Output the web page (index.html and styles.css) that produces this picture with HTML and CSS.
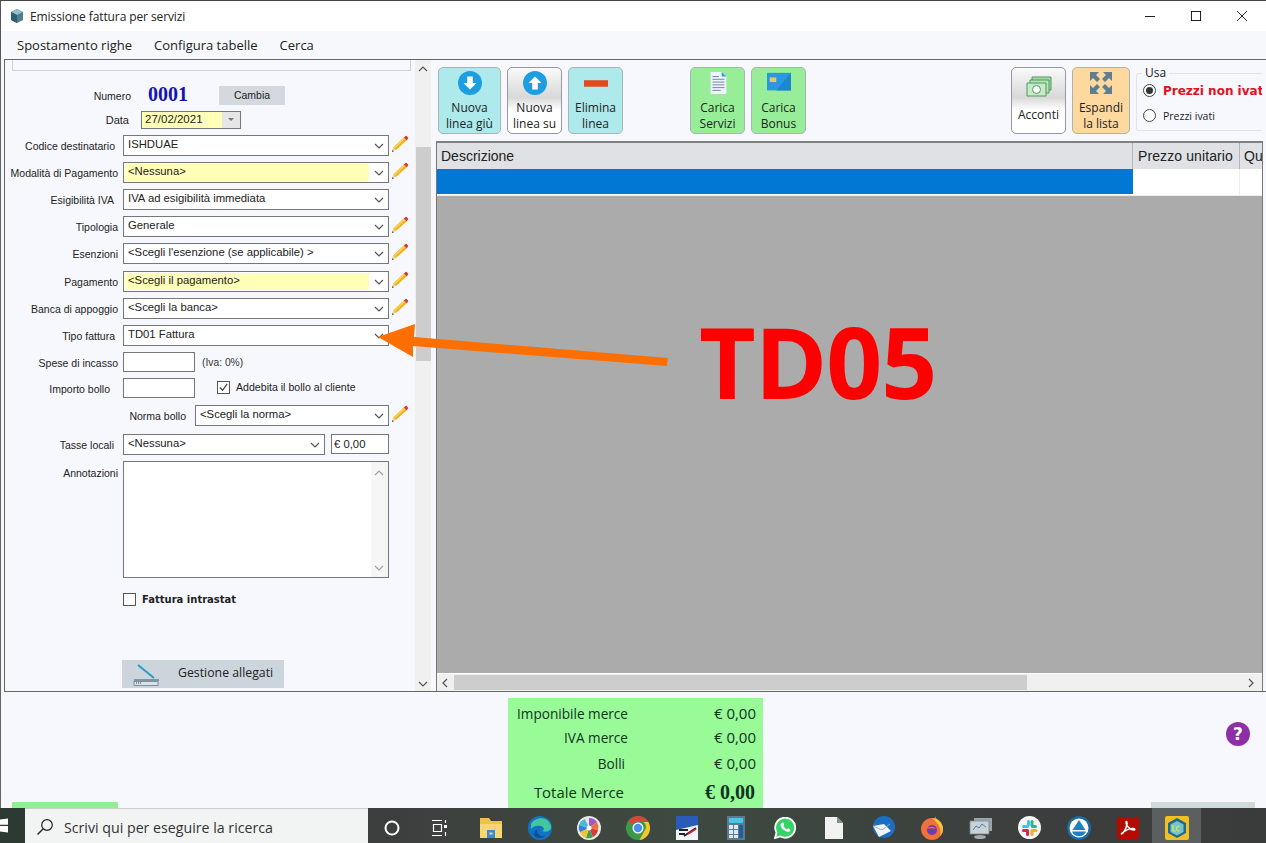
FILE: index.html
```html
<!DOCTYPE html>
<html lang="it">
<head>
<meta charset="utf-8">
<title>Emissione fattura per servizi</title>
<link rel="stylesheet" href="styles.css">
</head>
<body>
<svg class="defs" width="0" height="0">
  <defs>
    <symbol id="chev" viewBox="0 0 10 6"><path d="M1 1l4 4 4-4" fill="none" stroke="#555" stroke-width="1.2"/></symbol>
    <symbol id="pencil" viewBox="0 0 18 18">
      <path d="M1 17l1.2-4.6L4.900 15z" fill="#e9d3a0"/>
      <path d="M1 17l.5-1.900 1.400 1.400z" fill="#444"/>
      <path d="M2.200 12.400L12.800 2.600l2.800 2.900L4.900 15z" fill="#f2b01e"/>
      <path d="M2.200 12.400L12.800 2.600l1.300 1.400L3.500 13.800z" fill="#f9cf55"/>
      <path d="M12.800 2.600l1.700-1.500a1 1 0 0 1 1.300 0l1.200 1.300a1 1 0 0 1 0 1.300l-1.400 1.800z" fill="#c9453b"/>
    </symbol>
  </defs>
</svg>
<div class="window">
  <header class="titlebar">
    <svg class="app-icon" viewBox="0 0 14 16" width="14" height="16"><path d="M7 1l6 3v8l-6 3-6-3V4z" fill="#4f7f8c"/><path d="M7 1l6 3-6 3-6-3z" fill="#8cc0cc"/><path d="M7 7v8l-6-3V4z" fill="#2f5f70"/></svg>
    <span class="title-text">Emissione fattura per servizi</span>
    <div class="win-controls">
      <svg width="12" height="12" viewBox="0 0 12 12"><path d="M1 6.500h10" stroke="#222" stroke-width="1"/></svg>
      <svg width="12" height="12" viewBox="0 0 12 12"><rect x="1.500" y="1.500" width="9" height="9" fill="none" stroke="#222"/></svg>
      <svg width="12" height="12" viewBox="0 0 12 12"><path d="M1 1l10 10M11 1L1 11" stroke="#222" stroke-width="1"/></svg>
    </div>
  </header>
  <nav class="menubar">
    <span>Spostamento righe</span><span>Configura tabelle</span><span>Cerca</span>
  </nav>
  <main class="main">
    <section class="form-pane">
      <div class="form">
        <div class="top-stub"></div>
        <div class="numero-row">
          <span class="numero-label">Numero</span>
          <span class="numero-value">0001</span>
          <span class="cambia">Cambia</span>
        </div>
        <div class="data-row">
          <span class="data-label">Data</span>
          <div class="datebox"><span class="date-text">27/02/2021</span><span class="date-btn"></span></div>
        </div>
        <div class="row"><label class="lbl in3">Codice destinatario</label><div class="combo"><span class="val">ISHDUAE</span><svg class="chev"><use href="#chev"/></svg></div><svg class="pencil"><use href="#pencil"/></svg></div>
        <div class="row"><label class="lbl">Modalità di Pagamento</label><div class="combo"><span class="val yellow">&lt;Nessuna&gt;</span><svg class="chev"><use href="#chev"/></svg></div><svg class="pencil"><use href="#pencil"/></svg></div>
        <div class="row"><label class="lbl in4">Esigibilità IVA</label><div class="combo"><span class="val">IVA ad esigibilità immediata</span><svg class="chev"><use href="#chev"/></svg></div></div>
        <div class="row"><label class="lbl">Tipologia</label><div class="combo"><span class="val">Generale</span><svg class="chev"><use href="#chev"/></svg></div><svg class="pencil"><use href="#pencil"/></svg></div>
        <div class="row wide"><label class="lbl">Esenzioni</label><div class="combo"><span class="val">&lt;Scegli l'esenzione (se applicabile) &gt;</span><svg class="chev"><use href="#chev"/></svg></div><svg class="pencil"><use href="#pencil"/></svg></div>
        <div class="row"><label class="lbl">Pagamento</label><div class="combo"><span class="val yellow">&lt;Scegli il pagamento&gt;</span><svg class="chev"><use href="#chev"/></svg></div><svg class="pencil"><use href="#pencil"/></svg></div>
        <div class="row"><label class="lbl">Banca di appoggio</label><div class="combo"><span class="val">&lt;Scegli la banca&gt;</span><svg class="chev"><use href="#chev"/></svg></div><svg class="pencil"><use href="#pencil"/></svg></div>
        <div class="row"><label class="lbl in3">Tipo fattura</label><div class="combo"><span class="val">TD01 Fattura</span><svg class="chev"><use href="#chev"/></svg></div></div>
        <div class="row tight"><label class="lbl">Spese di incasso</label><div class="field"></div><span class="note">(Iva: 0%)</span></div>
        <div class="row"><label class="lbl in8">Importo bollo</label><div class="field"></div><span class="checkbox checked"><svg viewBox="0 0 12 12" width="11" height="11"><path d="M2 6l3 3 5-7" fill="none" stroke="#444" stroke-width="1.300"/></svg></span><span class="check-text">Addebita il bollo al cliente</span></div>
        <div class="row wide2"><label class="lbl norma">Norma bollo</label><div class="combo short"><span class="val">&lt;Scegli la norma&gt;</span><svg class="chev"><use href="#chev"/></svg></div><svg class="pencil"><use href="#pencil"/></svg></div>
        <div class="row"><label class="lbl in4">Tasse locali</label><div class="combo tasse"><span class="val">&lt;Nessuna&gt;</span><svg class="chev"><use href="#chev"/></svg></div><div class="field euro">€ 0,00</div></div>
        <div class="row notes-row"><label class="lbl notes-lbl">Annotazioni</label>
          <div class="textarea"><div class="ta-scroll"><svg class="ta-chev up"><use href="#chev"/></svg><svg class="ta-chev"><use href="#chev"/></svg></div></div>
        </div>
        <div class="intrastat"><span class="checkbox"></span><span class="intrastat-text">Fattura intrastat</span></div>
        <div class="allegati">
          <svg width="30" height="26" viewBox="0 0 30 26"><path d="M7 4l16 13" stroke="#2b9ac9" stroke-width="2"/><path d="M3 19h25" stroke="#3a5566" stroke-width="1"/><rect x="3" y="20.500" width="24" height="4" fill="#d9e2e8" stroke="#6c8090" stroke-width=".8"/><path d="M5 22h6" stroke="#335" stroke-width="1" stroke-dasharray="1 1"/></svg>
          <span>Gestione allegati</span>
        </div>
      </div>
      <div class="vscroll">
        <svg class="sb-arrow flip"><use href="#chev"/></svg>
        <div class="vthumb"></div>
        <svg class="sb-arrow bottom-arrow"><use href="#chev"/></svg>
      </div>
    </section>
    <section class="right-pane">
      <div class="toolbar">
        <div class="tbtn cyan w63">
          <svg class="ic" width="24" height="24" viewBox="0 0 26 26"><circle cx="13" cy="13" r="13" fill="#1e9ee0"/><path d="M10 6h6v7h4l-7 7-7-7h4z" fill="#fff"/></svg>
          <span>Nuova<br>linea giù</span>
        </div>
        <div class="tbtn white">
          <svg class="ic" width="24" height="24" viewBox="0 0 26 26"><circle cx="13" cy="13" r="13" fill="#1e9ee0"/><path d="M10 20h6v-7h4l-7-7-7 7h4z" fill="#fff"/></svg>
          <span>Nuova<br>linea su</span>
        </div>
        <div class="tbtn cyan">
          <svg class="ic" width="24" height="24" viewBox="0 0 26 26"><rect x="0" y="10" width="26" height="7" fill="#e2491c"/></svg>
          <span>Elimina<br>linea</span>
        </div>
        <div class="tbtn green gap-a">
          <svg class="ic" width="24" height="24" viewBox="0 0 26 26"><path d="M5 1h12l5 5v19H5z" fill="#eef4fb"/><path d="M17 1l5 5h-5z" fill="#2aa0e0"/><path d="M7 6h7M7 9h13M7 12h13M7 15h13M7 18h13M7 21h9" stroke="#6b7f9a" stroke-width="1"/></svg>
          <span>Carica<br>Servizi</span>
        </div>
        <div class="tbtn green">
          <svg class="ic" width="24" height="24" viewBox="0 0 26 26"><rect y="2" width="26" height="19" fill="#2a98dc"/><path d="M26 2v19H10z" fill="#1e86cc"/><rect x="3" y="7" width="7" height="5" fill="#e8c95a"/></svg>
          <span>Carica<br>Bonus</span>
        </div>
        <div class="tbtn white gap-b acconti">
          <svg class="ic" width="26" height="24" viewBox="0 0 26 24"><path d="M6 2h19v13H6z" fill="#a8d8a8" stroke="#4b9a5d"/><path d="M4 5h19v13H4z" fill="#b9e2b9" stroke="#4b9a5d"/><path d="M1 8h19v13H1z" fill="#c9eac9" stroke="#4b9a5d"/><circle cx="10.500" cy="14.500" r="4" fill="#fff" stroke="#4b9a5d"/></svg>
          <span>Acconti</span>
        </div>
        <div class="tbtn orange w58">
          <svg class="ic" width="24" height="24" viewBox="0 0 24 24"><g fill="#5f7d8c"><path d="M1 1h9L7 4l4 4-3 3-4-4-3 3z"/><path d="M23 1v9l-3-3-4 4-3-3 4-4-3-3z"/><path d="M1 23v-9l3 3 4-4 3 3-4 4 3 3z"/><path d="M23 23h-9l3-3-4-4 3-3 4 4 3-3z"/></g></svg>
          <span>Espandi<br>la lista</span>
        </div>
        <fieldset class="usa">
          <legend>Usa</legend>
          <div class="radio-row first"><span class="radio on"></span><span class="radio-strong">Prezzi non ivati</span></div>
          <div class="radio-row"><span class="radio"></span><span class="radio-text">Prezzi ivati</span></div>
        </fieldset>
      </div>
      <div class="grid">
        <div class="grid-head">
          <div class="col-desc">Descrizione</div><div class="col-price">Prezzo unitario</div><div class="col-q">Qu</div>
        </div>
        <div class="grid-row">
          <div class="cell-sel"></div><div class="cell-price"></div><div class="cell-q"></div>
        </div>
        <div class="grid-empty"></div>
        <div class="hscroll">
          <svg class="h-arrow left"><use href="#chev"/></svg>
          <div class="hthumb"></div>
          <svg class="h-arrow right"><use href="#chev"/></svg>
        </div>
      </div>
    </section>
  </main>
  <section class="bottom">
    <div class="stub-green"></div>
    <div class="totals">
      <div class="t-row r1"><span class="t-name">Imponibile merce</span><span class="t-val">€ 0,00</span></div>
      <div class="t-row r2"><span class="t-name">IVA merce</span><span class="t-val">€ 0,00</span></div>
      <div class="t-row r3"><span class="t-name n3">Bolli</span><span class="t-val">€ 0,00</span></div>
      <div class="t-row r4"><span class="t-name n4">Totale Merce</span><span class="t-total">€ 0,00</span></div>
    </div>
    <div class="side">
      <div class="help">?</div>
      <div class="stub-gray"></div>
    </div>
  </section>
  <footer class="taskbar">
    <div class="start"><svg width="8" height="15" viewBox="0 0 8 15"><path d="M0 1.500l8-1.100v6.300H0zM0 8h8v6.600l-8-1.100z" fill="#fff"/></svg></div>
    <div class="search">
      <svg width="18" height="18" viewBox="0 0 18 18"><circle cx="11" cy="7" r="5.300" fill="none" stroke="#222" stroke-width="1.200"/><path d="M7 11l-5.500 5.500" stroke="#222" stroke-width="1.400"/></svg>
      <span>Scrivi qui per eseguire la ricerca</span>
    </div>
    <div class="tray">
      <div class="cell cortana"><svg width="18" height="18" viewBox="0 0 18 18"><circle cx="9" cy="9" r="6.500" fill="none" stroke="#fff" stroke-width="2"/></svg></div>
      <div class="cell taskview"><svg width="18" height="18" viewBox="0 0 18 18"><path d="M1 1.500h10M1 16.500h10M2.500 5.500h8v7h-8z M14.500 1v3M14.500 13v4" fill="none" stroke="#fff" stroke-width="1.200"/><rect x="13" y="6" width="3" height="3" fill="#fff"/></svg></div>
      <div class="cell"><svg width="24" height="22" viewBox="0 0 24 22"><path d="M1 1h9l2 3h11v16H1z" fill="#f3c14a"/><path d="M1 7h22v14H1z" fill="#f7d774"/><path d="M8 13h8v8H8z" fill="#3a8ad6"/><path d="M10.500 15.500h3v2h-3z" fill="#f7d774"/></svg></div>
      <div class="cell"><svg width="24" height="24" viewBox="0 0 24 24"><circle cx="12" cy="12" r="12" fill="#1273c4"/><path d="M3 8C6 1 20-1 23 10c1 5-5 7-9 5 3-1 2-4-1-5-4-1-8 0-10 3z" fill="#42c6a0"/><path d="M9 14c0 4 4 7 8 6-3 3-9 3-11-1-1-2 1-5 3-5z" fill="#0b4f96"/></svg></div>
      <div class="cell"><svg width="24" height="24" viewBox="0 0 24 24"><circle cx="12" cy="12" r="12" fill="#e8e8e8"/><path d="M12 12L12 2a10 10 0 0 1 8 4z" fill="#a257c8"/><path d="M12 12l8-6a10 10 0 0 1 1 8z" fill="#e8743b"/><path d="M12 12l9 2a10 10 0 0 1-5 7z" fill="#d93838"/><path d="M12 12l4 9a10 10 0 0 1-7 1z" fill="#3da04a"/><path d="M12 12l-3 10a10 10 0 0 1-6-6z" fill="#f0c43a"/><path d="M12 12L3 16a10 10 0 0 1-1-7z" fill="#3a7dd8"/><path d="M12 12L2 9a10 10 0 0 1 6-6z" fill="#4cb8d8"/><circle cx="12" cy="12" r="2.500" fill="#fff"/></svg></div>
      <div class="cell"><svg width="24" height="24" viewBox="0 0 24 24"><circle cx="12" cy="12" r="12" fill="#3a9a4a"/><path d="M12 0a12 12 0 0 1 10.400 6H12a6 6 0 0 0-5.200 3L2.700 4.500A12 12 0 0 1 12 0z" fill="#d9453a"/><path d="M22.400 6a12 12 0 0 1-9 18l5-9a6 6 0 0 0-1-9z" fill="#f6c530"/><circle cx="12" cy="12" r="5.500" fill="#fff"/><circle cx="12" cy="12" r="4.200" fill="#4a8cf0"/></svg></div>
      <div class="cell"><svg width="22" height="24" viewBox="0 0 22 24"><rect width="22" height="24" fill="#f2f4fa"/><path d="M0 0h22v9L0 14z" fill="#2a5bb8"/><path d="M3 14h9M3 18h6M8 20l12-8" stroke="#222" stroke-width="1.800"/><path d="M12 18l8-5" stroke="#c8283c" stroke-width="1.600"/></svg></div>
      <div class="cell"><svg width="18" height="24" viewBox="0 0 18 24"><rect width="18" height="24" fill="#5e7a92"/><rect x="2" y="2" width="14" height="5" fill="#47c6ea"/><path d="M2 9h4v4H2zM7 9h4v4H7zM2 14h4v4H2zM7 14h4v4H7zM2 19h4v3H2zM7 19h4v3H7z" fill="#dfe8ee"/><rect x="12" y="9" width="4" height="13" fill="#1f5f99"/></svg></div>
      <div class="cell"><svg width="22" height="22" viewBox="0 0 22 22"><path d="M1 21l1.500-5.400A10 10 0 1 1 6.500 19.500z" fill="#35d366" stroke="#fff" stroke-width="1.800"/><path d="M7.500 6.500c1-1.500 2-1 2.500.5.300 1 0 1.300-.6 2 .8 1.500 2 2.700 3.500 3.500.8-.9 1.200-1.200 2-.7 1.700.8 2 1.500.6 2.700-2 1.500-8-2-9-6-.2-1 .4-1.700 1-2.500z" fill="#fff"/></svg></div>
      <div class="cell"><svg width="18" height="22" viewBox="0 0 18 22"><path d="M0 0h12l6 6v16H0z" fill="#f2f2f2"/><path d="M12 0l6 6h-6z" fill="#8a8a8a"/></svg></div>
      <div class="cell"><svg width="24" height="24" viewBox="0 0 24 24"><circle cx="13" cy="11" r="11" fill="#1b6fc2"/><path d="M2 10l11-2 7 7-12 6z" fill="#f2f4f8"/><path d="M2 10l9 4 8-6" fill="none" stroke="#9cb4cc" stroke-width="1"/></svg></div>
      <div class="cell"><svg width="24" height="24" viewBox="0 0 24 24"><circle cx="12" cy="13" r="11" fill="#f0703a"/><path d="M12 2c6 0 11 5 11 11 0 3-1 5-3 7 2-7-2-13-8-18z" fill="#fbb93c"/><path d="M15 0c1 4 6 6 7 12-3-4-7-7-7-12z" fill="#fdd13f"/><circle cx="12" cy="14" r="5" fill="#6a3ab8"/><path d="M7 13c2-3 7-3 9 0-3-1-6-1-9 0z" fill="#f0703a"/></svg></div>
      <div class="cell"><svg width="24" height="22" viewBox="0 0 24 22"><rect x="5" y="1" width="18" height="13" fill="#9aa6ac"/><rect x="1" y="4" width="19" height="13" fill="#c9d2d6" stroke="#7b878c" stroke-width=".8"/><path d="M4 13l3-4 3 2 3-4 4 3" fill="none" stroke="#4d7fa8"/><ellipse cx="11" cy="20" rx="6" ry="2" fill="#a6acb0"/></svg></div>
      <div class="cell"><svg width="23" height="23" viewBox="0 0 23 23"><circle cx="11.500" cy="11.500" r="11.500" fill="#f5f5f5"/><rect x="4" y="9" width="7" height="3" rx="1.500" fill="#36c5f0"/><rect x="9" y="4" width="3" height="6" rx="1.500" fill="#36c5f0"/><rect x="12.500" y="4" width="3" height="7" rx="1.500" fill="#2eb67d"/><rect x="13" y="9" width="6" height="3" rx="1.500" fill="#2eb67d"/><rect x="12.500" y="13" width="7" height="3" rx="1.500" fill="#ecb22e"/><rect x="12.500" y="14" width="3" height="6" rx="1.500" fill="#ecb22e"/><rect x="4" y="13" width="7" height="3" rx="1.500" fill="#e01e5a"/><rect x="8" y="14" width="3" height="6" rx="1.500" fill="#e01e5a"/></svg></div>
      <div class="cell"><svg width="24" height="24" viewBox="0 0 24 24"><circle cx="12" cy="12" r="12" fill="#1c6aa0"/><circle cx="12" cy="12" r="9.500" fill="#fff"/><path d="M12 4l6.500 10h-13z" fill="#1f7fc4"/><path d="M5 15.500h14a7.500 7.500 0 0 1-14 0z" fill="#1f7fc4"/></svg></div>
      <div class="cell"><svg width="22" height="22" viewBox="0 0 22 22"><rect width="22" height="22" rx="2" fill="#b30b00"/><path d="M4 17c3-1 5-5 6-10 .3-2-.5-3-1-2-.5 2 3 8 8 8 1.500 0 1-1.500-1-1.500-3 0-7 1-12 5.500z" fill="none" stroke="#fff" stroke-width="1.500"/></svg></div>
      <div class="cell active"><svg width="24" height="24" viewBox="0 0 24 24"><rect width="24" height="24" rx="2" fill="#f0c020"/><path d="M12 2l9 5v10l-9 5-9-5V7z" fill="#1f6a90"/><path d="M12 5l6.500 3.500v7.500L12 19.500 5.500 16V8.500z" fill="#7ac4c8"/><path d="M8 9v6h2.500M14.500 10.500c-1.500-1-3 0-3 2s1.500 3 3 2" fill="none" stroke="#d9e84a" stroke-width="1.200"/></svg></div>
    </div>
  </footer>
  <div class="annotation">
    <svg class="arrow" width="300" height="50" viewBox="0 0 300 50"><path d="M0 13L37 0l-1 13 254 21-1 8-254-20v11z" fill="#ff6f00"/></svg>
    <span class="td05">TD05</span>
  </div>
</div>
</body>
</html>
```

FILE: styles.css
```css
* { box-sizing: border-box; }
html, body { margin: 0; padding: 0; }
body { width: 1266px; height: 843px; overflow: hidden; background: #f7f8fe; font-family: "Liberation Sans", Arial, sans-serif; color: #111; }
.defs { position: absolute; }

.window { position: relative; width: 1266px; height: 843px; display: flex; flex-direction: column; overflow: hidden; background: #f7f8fe; }

.titlebar { height: 31px; flex: none; background: #fff; border-top: 1px solid #444; border-left: 1px solid #555; display: flex; align-items: center; padding-left: 9px; font-family: "Open Sans", sans-serif; font-size: 12px; color: #222; }
.app-icon { margin-right: 6px; }
.title-text { letter-spacing: -.1px; }
.win-controls { margin-left: auto; display: flex; gap: 34px; padding-right: 18px; }

.menubar { height: 28px; flex: none; background: #f6f8fc; border-left: 1px solid #555; display: flex; align-items: center; gap: 22px; padding-left: 16px; font-family: "Open Sans", sans-serif; font-size: 13px; color: #222; padding-bottom: 1px; }

.main { height: 633px; flex: none; margin-left: 4px; border: 1px solid #666; border-right: none; display: flex; }
.window::before { content: ""; position: absolute; left: 0; top: 59px; width: 1px; height: 749px; background: #666; }

.form-pane { width: 431px; flex: none; display: flex; }
.form { width: 410px; flex: none; display: flex; flex-direction: column; }
.top-stub { width: 399px; height: 11px; margin-left: 7px; border: 1px solid #cfd2d8; border-top: none; flex: none; }

.numero-row { display: flex; align-items: center; height: 20px; margin-top: 14px; flex: none; }
.numero-label { width: 126px; text-align: right; font-size: 10.500px; padding-top: 2px; color: #222; }
.numero-value { width: 88px; padding-left: 17px; font-family: "Liberation Serif", serif; font-weight: bold; font-size: 20px; color: #1414b4; margin-top: -2px; }
.cambia { width: 66px; height: 19px; background: #d3d9df; text-align: center; font-size: 10.500px; line-height: 18px; color: #222; }

.data-row { display: flex; align-items: center; height: 18px; margin-top: 6px; flex: none; }
.data-label { width: 124px; text-align: right; font-size: 11px; color: #222; }
.datebox { width: 100px; height: 18px; margin-left: 12px; border: 1px solid #777; background: #ffffb8; display: flex; font-size: 11.500px; line-height: 15px; }
.date-text { flex: 1; padding-left: 3px; color: #222; }
.date-btn { width: 18px; background: #e6e6e6; position: relative; }
.date-btn::after { content: ""; position: absolute; left: 6px; top: 6px; border: 3px solid transparent; border-top-color: #777; }

.row { display: flex; align-items: flex-start; height: 21px; margin-bottom: 6px; flex: none; }
.data-row + .row { margin-top: 6px; }
.wide { margin-bottom: 7px; }
.tight { margin-bottom: 5px; height: 21px; }
.wide2 { margin-bottom: 8px; }
.lbl { width: 113px; flex: none; margin-right: 5px; text-align: right; font-size: 10.500px; line-height: 21px; padding-top: 1px; color: #222; white-space: nowrap; }
.in3 { padding-right: 3px; }
.in4 { padding-right: 4px; }
.in8 { padding-right: 8px; }
.norma { width: 185px; margin-right: 5px; padding-right: 4px; }
.combo { width: 266px; height: 21px; flex: none; border: 1px solid #777; background: #fff; display: flex; align-items: center; font-size: 11.300px; color: #222; padding: 1px; }
.combo.short { width: 194px; }
.combo.tasse { width: 202px; }
.val { flex: 1; height: 100%; padding-left: 3px; line-height: 14px; white-space: nowrap; }
.yellow { background: #ffffb8; }
.chev { width: 10px; height: 6px; margin: 1px 3px 0 5px; flex: none; }
.pencil { width: 18px; height: 18px; margin-left: 2px; flex: none; }

.field { width: 72px; height: 20px; flex: none; border: 1px solid #777; background: #fff; }
.field.euro { width: 58px; height: 20px; margin-left: 6px; font-size: 11.300px; line-height: 18px; padding-left: 2px; color: #222; }
.note { font-size: 10.300px; line-height: 20px; margin-left: 7px; padding-top: 1px; color: #333; }
.checkbox { width: 13px; height: 13px; flex: none; border: 1px solid #555; background: #fff; display: inline-flex; align-items: center; justify-content: center; }
.checkbox.checked { margin: 3px 0 0 22px; }
.check-text { font-size: 10.600px; line-height: 19px; margin-left: 6px; color: #222; }

.notes-row { height: 117px; margin-bottom: 0; }
.notes-lbl { line-height: 21px; padding-top: 2px; }
.textarea { width: 266px; height: 117px; border: 1px solid #777; background: #fff; display: flex; justify-content: flex-end; }
.ta-scroll { width: 17px; background: #f0f0f0; display: flex; flex-direction: column; justify-content: space-between; padding: 8px 3px 6px; opacity: .55; }
.ta-chev { width: 10px; height: 6px; }
.ta-chev.up, .flip { transform: scaleY(-1); }

.intrastat { display: flex; align-items: center; height: 14px; margin: 14px 0 0 118px; flex: none; }
.intrastat-text { margin-left: 6px; font-family: "DejaVu Sans", sans-serif; font-weight: bold; font-size: 10px; color: #222; }
.allegati { width: 162px; height: 28px; margin: 54px 0 0 117px; background: #ccd5dc; display: flex; align-items: center; padding-left: 9px; font-family: "Open Sans", sans-serif; font-size: 12.300px; color: #222; flex: none; }
.allegati span { margin: 0 0 3px 17px; }

.vscroll { width: 16px; flex: none; background: #f0f0f0; display: flex; flex-direction: column; align-items: center; position: relative; }
.sb-arrow { width: 10px; height: 6px; margin-top: 6px; flex: none; }
.vthumb { width: 15px; height: 214px; background: #cdcdcd; margin-top: 75px; flex: none; }
.bottom-arrow { margin-top: auto; margin-bottom: 4px; }

.right-pane { flex: 1; min-width: 0; display: flex; flex-direction: column; padding-left: 0; overflow: hidden; }

.toolbar { height: 81px; flex: none; display: flex; align-items: flex-start; padding: 7px 0 0 1px; margin-left: 1px; }
.tbtn { width: 55px; height: 67px; flex: none; margin-left: 6px; border: 1px solid #a9b4b4; border-radius: 5px; display: flex; flex-direction: column; align-items: center; font-family: "Open Sans", sans-serif; font-size: 12px; line-height: 16px; text-align: center; color: #222; padding-top: 3px; }
.tbtn:first-child { margin-left: 0; }
.tbtn span { margin-top: 5px; }
.cyan { background: #aee9ec; }
.green { background: #98ee98; }
.white { background: linear-gradient(#fafafa, #d8d8d8 45%, #fff 65%); border-color: #999; }
.orange { background: #fdd9a0; }
.w63 { width: 63px; }
.w58 { width: 58px; }
.gap-a { margin-left: 67px; }
.gap-b { margin-left: 205px; }
.acconti .ic { margin-top: 4px; }
.acconti span { margin-top: 8px; }

.usa { width: 126px; height: 64px; margin: 0 0 0 6px; padding: 2px 0 0 6px; border: 1px solid #e1e3e8; border-right: none; border-radius: 3px 0 0 3px; flex: none; min-width: 0; }
.usa legend { padding: 0 3px; margin-left: -1px; font-family: "Open Sans", sans-serif; font-size: 12px; line-height: 12px; color: #222; }
.radio-row { display: flex; align-items: center; height: 23px; overflow: hidden; }
.radio-row.first { height: 19px; margin-bottom: 4px; }
.radio { width: 13px; height: 13px; border-radius: 50%; border: 1px solid #444; background: #fff; flex: none; position: relative; }
.radio.on::after { content: ""; position: absolute; left: 2px; top: 2px; width: 7px; height: 7px; border-radius: 50%; background: #333; }
.radio-strong { margin-left: 7px; font-family: "DejaVu Sans", sans-serif; font-weight: bold; font-size: 12px; color: #e0101c; white-space: nowrap; }
.radio-text { margin-left: 7px; font-family: "Open Sans", sans-serif; font-size: 10.500px; color: #222; }

.grid { width: 827px; flex: 1; min-height: 0; margin-left: 0; border-top: 2px solid #808080; border-left: 1px solid #777; border-right: 1px solid #777; display: flex; flex-direction: column; background: #ababab; }
.grid-head { height: 26px; flex: none; display: flex; background: #dfe1e5; font-size: 14px; line-height: 26px; color: #222; }
.col-desc { width: 696px; padding-left: 4px; border-right: 1px solid #b5b5b5; }
.col-price { width: 107px; padding-left: 5px; border-right: 1px solid #b5b5b5; white-space: nowrap; letter-spacing: .1px; }
.col-q { flex: 1; padding-left: 4px; overflow: hidden; }
.grid-row { height: 27px; flex: none; display: flex; background: #fff; border-bottom: 1px solid #eee; }
.cell-sel { width: 696px; background: #0078d4; margin-bottom: 1px; }
.cell-price { width: 107px; border-right: 1px solid #eee; }
.cell-q { flex: 1; }
.grid-empty { flex: 1; background: #ababab; }
.hscroll { height: 18px; flex: none; background: #f0f0f0; border-top: 1px solid #fff; display: flex; align-items: center; }
.h-arrow { width: 10px; height: 6px; flex: none; }
.h-arrow.left { transform: rotate(90deg); margin-left: 3px; }
.h-arrow.right { transform: rotate(-90deg); margin-left: auto; margin-right: 6px; }
.hthumb { width: 573px; height: 15px; margin-left: 4px; background: #cdcdcd; }

.bottom { height: 116px; flex: none; display: flex; }
.stub-green { width: 106px; height: 6px; margin-left: 12px; align-self: flex-end; background: #90f090; flex: none; }
.totals { width: 255px; height: 110px; margin: 6px 0 0 390px; background: #98fb98; flex: none; font-family: "Open Sans", sans-serif; color: #132; }
.t-row { display: flex; align-items: center; position: relative; }
.t-name { width: 120px; text-align: right; font-size: 13.600px; white-space: nowrap; }
.t-val { margin-left: auto; padding-right: 7px; font-size: 15px; }
.t-total { margin-left: auto; padding-right: 8px; font-family: "Liberation Serif", serif; font-weight: bold; font-size: 20px; }
.n3 { width: 117px; }
.n4 { width: 116px; font-size: 14.900px; }
.r1 { height: 24px; margin-top: 3px; }
.r2 { height: 24px; }
.r3 { height: 26px; margin-top: 1px; }
.r4 { height: 30px; margin-top: 1px; }

.side { flex: 1; display: flex; flex-direction: column; }
.help { width: 24px; height: 24px; margin: 30px 0 0 463px; border-radius: 50%; background: #8e2fa6; color: #fff; font-family: "DejaVu Sans", sans-serif; font-weight: bold; font-size: 17px; line-height: 24px; text-align: center; flex: none; }
.stub-gray { width: 104px; height: 6px; margin: auto 0 0 388px; background: #d0d9dc; flex: none; }

.taskbar { height: 35px; flex: none; display: flex; background: #3c3f3e; }
.start { width: 25px; flex: none; background: #2c3a33; display: flex; align-items: center; }
.search { width: 343px; flex: none; background: #f2f3f3; border-top: 1px solid #ccc; display: flex; align-items: center; padding-left: 11px; padding-top: 2px; font-family: "Open Sans", sans-serif; font-size: 14.200px; color: #333; }
.search span { margin-left: 10px; }
.tray { display: flex; background: linear-gradient(90deg, #3d3e3e, #3d4a40 35%, #3c3f3e 70%, #3a3c3c); flex: 1; }
.cell { width: 49px; flex: none; display: flex; align-items: center; justify-content: center; padding-top: 4px; }
.cortana { width: 48px; }
.taskview { width: 47px; margin-right: 3px; }
.active { background: #5c5f60; padding-top: 4px; }

.annotation { position: absolute; left: 0; top: 0; width: 0; height: 0; }
.arrow { position: absolute; left: 378px; top: 324px; }
.td05 { position: absolute; left: 699px; top: 295px; font-family: "Open Sans", sans-serif; font-weight: bold; font-size: 98px; line-height: 132px; color: #ff0000; letter-spacing: -1px; white-space: nowrap; }
```
